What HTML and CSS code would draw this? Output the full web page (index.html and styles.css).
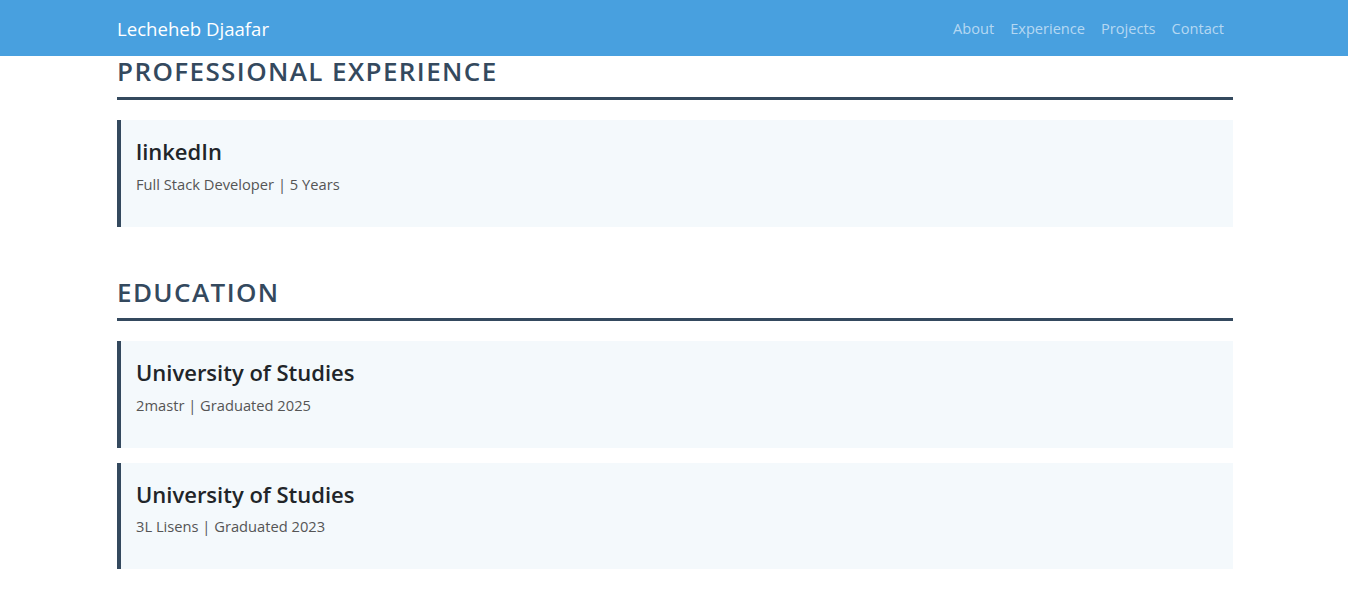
FILE: index.html
```html
<!DOCTYPE html>
<html lang="en">
<head>
<meta charset="utf-8">
<title>Lecheheb Djaafar</title>
<link rel="stylesheet" href="styles.css">
</head>
<body>
<nav class="navbar">
  <div class="container nav-inner">
    <a class="brand" href="#">Lecheheb Djaafar</a>
    <ul class="nav-links">
      <li><a href="#about">About</a></li>
      <li><a href="#experience">Experience</a></li>
      <li><a href="#projects">Projects</a></li>
      <li><a href="#contact">Contact</a></li>
    </ul>
  </div>
</nav>
<main class="container">
  <section class="section" id="experience">
    <h2 class="section-title">PROFESSIONAL EXPERIENCE</h2>
    <div class="card">
      <h3 class="card-title">linkedIn</h3>
      <p class="card-sub">Full Stack Developer | 5 Years</p>
    </div>
  </section>
  <section class="section" id="education">
    <h2 class="section-title">EDUCATION</h2>
    <div class="card">
      <h3 class="card-title">University of Studies</h3>
      <p class="card-sub">2mastr | Graduated 2025</p>
    </div>
    <div class="card">
      <h3 class="card-title">University of Studies</h3>
      <p class="card-sub">3L Lisens | Graduated 2023</p>
    </div>
  </section>
</main>
</body>
</html>
```
FILE: styles.css
```css
* { box-sizing: border-box; }
html, body { margin: 0; padding: 0; }
body {
  font-family: "Open Sans", "Noto Sans", sans-serif;
  color: #212529;
  background: #ffffff;
}
.container {
  width: 1116px;
  margin-left: calc(50% - 557px);
}
.navbar {
  background: #48a0df;
  height: 56px;
}
.nav-inner {
  display: flex;
  align-items: center;
  justify-content: space-between;
  height: 100%;
}
.brand {
  color: #ffffff;
  font-size: 18.6px;
  text-decoration: none;
}
.nav-links {
  list-style: none;
  display: flex;
  margin: 0 1px 0 0;
  padding: 0;
}
.nav-links a {
  display: block;
  padding: 8px 8px;
  color: rgba(255, 255, 255, 0.6);
  text-decoration: none;
  font-size: 14.6px;
}
.section {
  margin-bottom: 50px;
}
.section-title {
  margin: 0 0 20px;
  padding-bottom: 10px;
  border-bottom: 3px solid #34495e;
  color: #34495e;
  font-size: 26px;
  font-weight: 600;
  letter-spacing: 1.4px;
  line-height: 1.2;
}
.card {
  background: #f4f9fc;
  border-left: 4px solid #34495e;
  padding: 17px 15px 15px;
  margin-bottom: 15px;
}
.card-title {
  margin: 0 0 7px;
  font-size: 22px;
  font-weight: 600;
  line-height: 1.3;
  color: #212529;
}
.card-sub {
  margin: 0 0 17px;
  font-size: 14.7px;
  line-height: 1.5;
  color: #555555;
}
```
